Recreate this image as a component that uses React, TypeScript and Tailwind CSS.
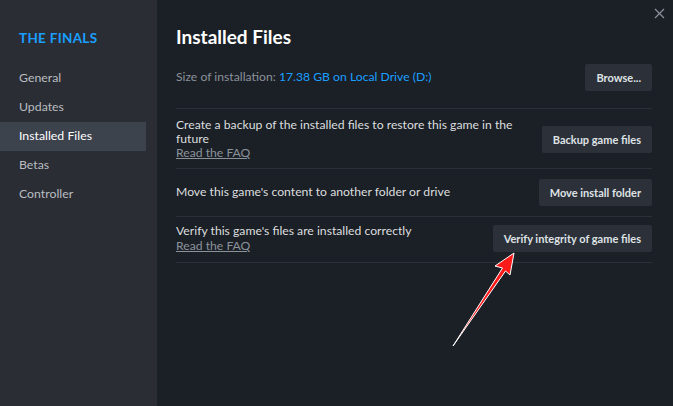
import React from "react";

const font = { fontFamily: 'Lato, "Noto Sans", Arial, sans-serif' };

function Btn({ children }: { children: React.ReactNode }) {
  return (
    <button className="h-[27px] px-[11px] rounded-[2px] bg-[#2c3038] text-[#dfe3e6] text-[11px] font-bold leading-none whitespace-nowrap shrink-0">
      {children}
    </button>
  );
}

export default function App() {
  const nav = ["General", "Updates", "Installed Files", "Betas", "Controller"];
  return (
    <div className="relative w-[673px] h-[406px] flex overflow-hidden bg-[#1b1f26]" style={font}>
      <aside className="w-[157px] shrink-0 bg-[#2a2d33] pt-[30px] pr-[11px]">
        <div className="pl-[19px] text-[13.5px] leading-[16px] font-bold text-[#1a9fff] tracking-[0.3px]">THE FINALS</div>
        <nav className="mt-[18px] flex flex-col">
          {nav.map((n) => (
            <div
              key={n}
              className={
                "h-[29px] flex items-center pl-[19px] text-[12.3px] " +
                (n === "Installed Files" ? "bg-[#3d434d] text-white" : "text-[#b9bdc1]")
              }
            >
              {n}
            </div>
          ))}
        </nav>
      </aside>
      <main className="flex-1 pl-[19px] pr-[21px] pt-[25px]">
        <h1 className="text-[19px] leading-[24px] font-bold text-white">Installed Files</h1>
        <div className="mt-[15px] flex items-center justify-between pb-[17px] border-b border-[#2c3139]">
          <div className="text-[12.2px] text-[#8b929a]">
            Size of installation: <span className="text-[#1a9fff]">17.38 GB on Local Drive (D:)</span>
          </div>
          <Btn>Browse...</Btn>
        </div>
        <div className="flex items-center justify-between pt-[9px] pb-[8px] border-b border-[#2c3139]">
          <div className="text-[12.2px] leading-[14px] text-[#dcdedf] w-[340px]">
            <div>Create a backup of the installed files to restore this game in the future</div>
            <div className="text-[#8b929a] underline">Read the FAQ</div>
          </div>
          <Btn>Backup game files</Btn>
        </div>
        <div className="flex items-center justify-between py-[10px] border-b border-[#2c3139]">
          <div className="text-[12.2px] text-[#dcdedf]">Move this game's content to another folder or drive</div>
          <Btn>Move install folder</Btn>
        </div>
        <div className="flex items-center justify-between pt-[6px] pb-[9px] border-b border-[#2c3139]">
          <div className="text-[12.2px] leading-[15px] text-[#dcdedf]">
            <div>Verify this game's files are installed correctly</div>
            <div className="text-[#8b929a] underline">Read the FAQ</div>
          </div>
          <Btn>Verify integrity of game files</Btn>
        </div>
      </main>
      <svg className="absolute left-[654px] top-[8px]" width="11" height="11" viewBox="0 0 11 11">
        <path d="M1 1L10 10M10 1L1 10" stroke="#8b929a" strokeWidth="1.2" />
      </svg>
      <svg className="absolute left-0 top-0 pointer-events-none" width="673" height="406" viewBox="0 0 673 406">
        <polygon
          points="514,253 510,275 505.5,271 453,346 502.5,268 495,266"
          fill="#ff1a1a"
          stroke="#ffffff"
          strokeWidth="1"
          strokeLinejoin="round"
        />
      </svg>
    </div>
  );
}
